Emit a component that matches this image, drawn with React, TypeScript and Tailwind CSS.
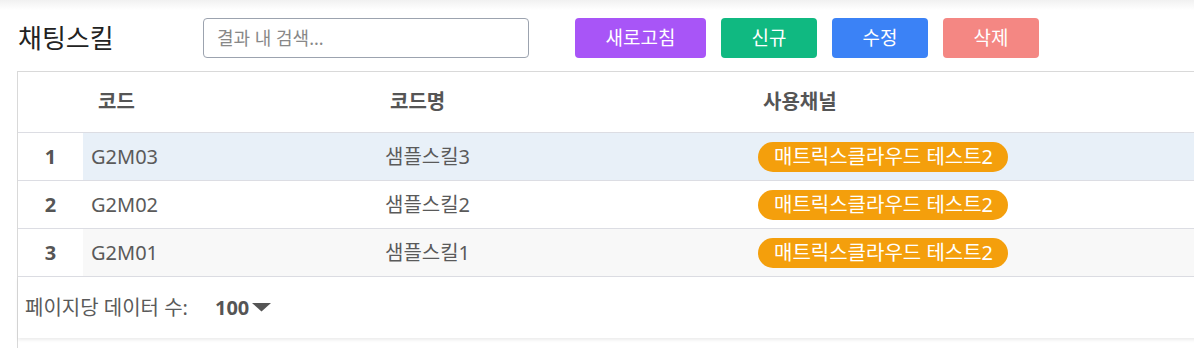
import React from "react";

interface SkillRow {
    no: number;
    code: string;
    name: string;
    channel: string;
    rowClass: string;
}

const rows: SkillRow[] = [
    { no: 1, code: "G2M03", name: "샘플스킬3", channel: "매트릭스클라우드 테스트2", rowClass: "bg-[#e8f0f8]" },
    { no: 2, code: "G2M02", name: "샘플스킬2", channel: "매트릭스클라우드 테스트2", rowClass: "bg-white" },
    { no: 3, code: "G2M01", name: "샘플스킬1", channel: "매트릭스클라우드 테스트2", rowClass: "bg-[#f8f8f8]" },
];

const font = { fontFamily: '"Noto Sans", "Noto Sans CJK KR", sans-serif' };

const ToolButton: React.FC<{ label: string; className: string }> = ({ label, className }) => (
    <button className={`h-10 rounded-[4px] text-white text-[19px] leading-none ${className}`}>{label}</button>
);

const App: React.FC = () => {
    return (
        <div className="w-[1194px] h-[348px] overflow-hidden bg-white relative" style={font}>
            <div className="h-[10px] bg-gradient-to-b from-[#f1f1f1] to-white absolute top-0 left-0 right-0" />
            <div className="flex items-center h-10 mt-[18px] pl-[18px]">
                <h1 className="w-[185px] text-[26px] text-[#222] leading-none">채팅스킬</h1>
                <input
                    type="text"
                    placeholder="결과 내 검색..."
                    className="w-[326px] h-10 rounded-[4px] border border-[#9ca3af] px-[13px] text-[18px] placeholder:text-[#888] outline-none"
                />
                <div className="flex gap-[15px] ml-[46px]">
                    <ToolButton label="새로고침" className="w-[131px] bg-[#a855f7]" />
                    <ToolButton label="신규" className="w-[96px] bg-[#10b981]" />
                    <ToolButton label="수정" className="w-[96px] bg-[#3b82f6]" />
                    <ToolButton label="삭제" className="w-[96px] bg-[#f48783]" />
                </div>
            </div>

            <div className="ml-[17px] mt-[13px] w-[1200px] h-[300px] border-l border-t border-[#d9d9d9]">
                <div className="flex h-[61px] items-center border-b border-[#dcdde3] text-[20px] font-bold text-[#555]">
                    <div className="w-[65px]" />
                    <div className="w-[294px] pl-[15px]">코드</div>
                    <div className="w-[373px] pl-[13px]">코드명</div>
                    <div className="pl-[13px]">사용채널</div>
                </div>
                {rows.map((row) => (
                    <div key={row.no} className="flex h-[48px] border-b border-[#dcdde3] text-[20px] text-[#5a5a5a]">
                        <div className="w-[65px] bg-white flex items-center justify-center font-bold text-[#555]">{row.no}</div>
                        <div className={`flex-1 flex items-center ${row.rowClass}`}>
                            <div className="w-[294px] pl-[8px]">{row.code}</div>
                            <div className="w-[373px] pl-[8px]">{row.name}</div>
                            <div className="pl-[8px]">
                                <span className="inline-flex items-center h-[30px] pl-[16px] pr-[15px] rounded-full bg-[#f49f0c] text-white text-[20px] leading-none">
                                    {row.channel}
                                </span>
                            </div>
                        </div>
                    </div>
                ))}
                <div className="flex items-center h-[61px] pl-[7px] shadow-[0_2px_3px_rgba(0,0,0,0.08)] text-[20px] text-[#5a5a5a]">
                    <span>페이지당 데이터 수:</span>
                    <span className="ml-[27px] font-bold text-[#555]">100</span>
                    <svg width="19" height="9" viewBox="0 0 19 9" className="ml-[3px]">
                        <path d="M0 0 H19 L9.5 8.5 Z" fill="#555" />
                    </svg>
                </div>
            </div>
        </div>
    );
};

export default App;
